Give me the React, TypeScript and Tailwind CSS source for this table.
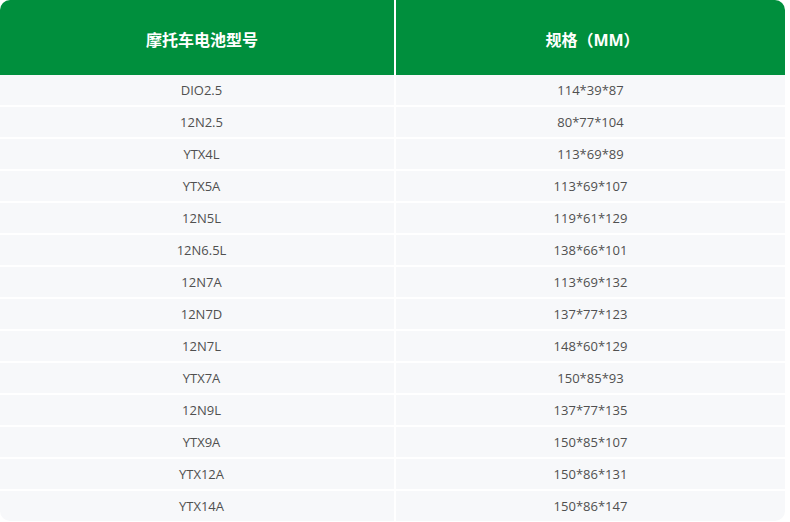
const rows: [string, string][] = [
  ["DIO2.5", "114*39*87"],
  ["12N2.5", "80*77*104"],
  ["YTX4L", "113*69*89"],
  ["YTX5A", "113*69*107"],
  ["12N5L", "119*61*129"],
  ["12N6.5L", "138*66*101"],
  ["12N7A", "113*69*132"],
  ["12N7D", "137*77*123"],
  ["12N7L", "148*60*129"],
  ["YTX7A", "150*85*93"],
  ["12N9L", "137*77*135"],
  ["YTX9A", "150*85*107"],
  ["YTX12A", "150*86*131"],
  ["YTX14A", "150*86*147"],
];

export default function App() {
  return (
    <div className="w-[790px] h-[522px] bg-white">
      <div
        className="w-[785px] rounded-[10px] overflow-hidden bg-white"
        style={{ fontFamily: '"Open Sans", "Noto Sans CJK SC", sans-serif' }}
      >
        {/* header */}
        <div className="grid grid-cols-[394px_1fr] gap-x-[2px] h-[75px]">
          <div className="bg-[#008f3d] flex items-center justify-center pt-[4px] pl-[10px] text-white text-[16px] font-bold">
            摩托车电池型号
          </div>
          <div className="bg-[#008f3d] flex items-center justify-center pt-[4px] pl-[4px] text-white text-[16px] font-bold">
            规格（MM）
          </div>
        </div>

        {/* body */}
        {rows.map(([model, size], i) => (
          <div
            key={model}
            className={
              i === 0
                ? "grid grid-cols-[394px_1fr] gap-x-[2px] h-[30px]"
                : "grid grid-cols-[394px_1fr] gap-x-[2px] h-[30px] mt-[2px]"
            }
          >
            <div className="bg-[#f7f8fa] flex items-center justify-center pt-[1px] pl-[9px] text-[13px] text-[#505050]">
              {model}
            </div>
            <div className="bg-[#f7f8fa] flex items-center justify-center pt-[1px] text-[13px] text-[#505050]">
              {size}
            </div>
          </div>
        ))}
      </div>
    </div>
  );
}
